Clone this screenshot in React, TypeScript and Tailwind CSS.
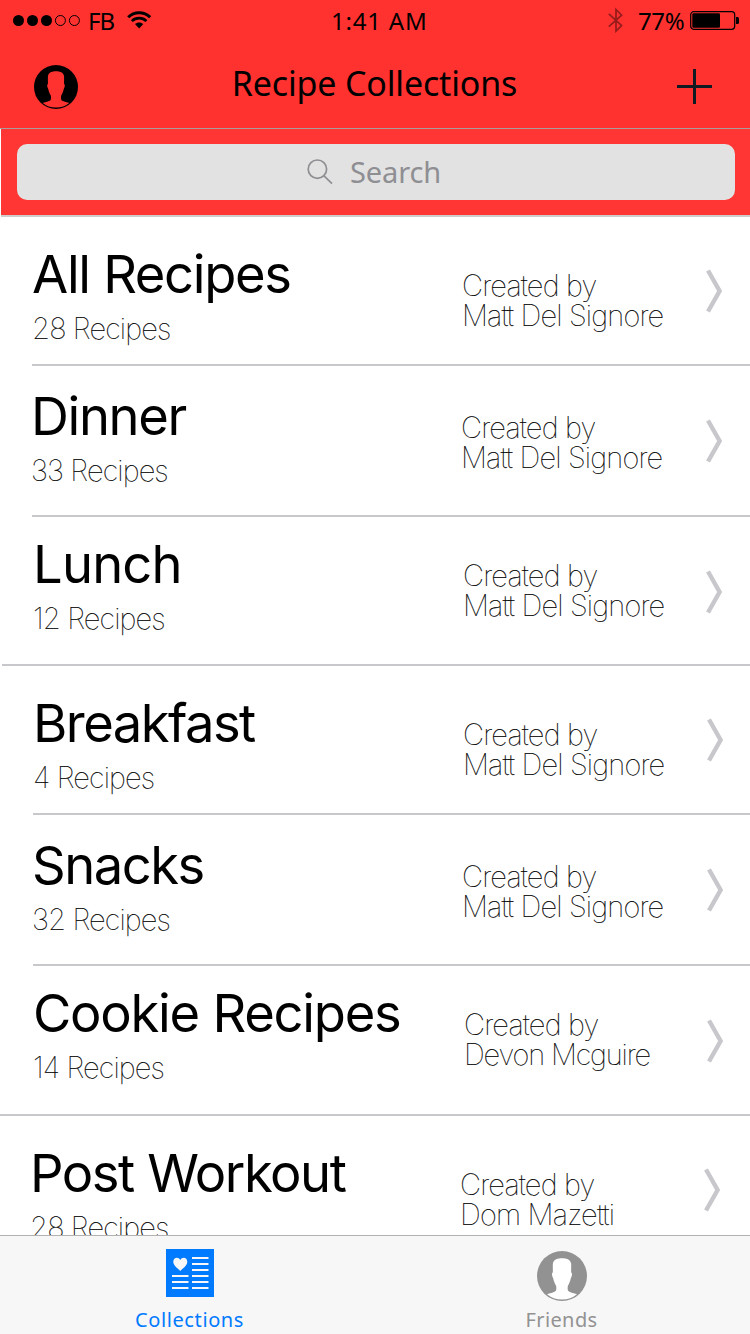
import React from "react";

type Collection = {
  title: string;
  count: string;
  author: string;
  row: string;
  line: string;
  text: string;
  tracking: string;
  creator: string;
  authorTracking: string;
  chevron: string;
};

const collections: Collection[] = [
  { title: "All Recipes", count: "28 Recipes", author: "Matt Del Signore", row: "h-[149px]", line: "ml-8", text: "pt-[25px] pl-[32px]", tracking: "tracking-[-1.32px]", creator: "pt-[54px] left-[462px]", authorTracking: "tracking-[-0.83px]", chevron: "left-[706px] top-[52px]" },
  { title: "Dinner", count: "33 Recipes", author: "Matt Del Signore", row: "h-[151px]", line: "ml-8", text: "pt-[18px] pl-[31px]", tracking: "tracking-[-1.35px]", creator: "pt-[47px] left-[461px]", authorTracking: "tracking-[-0.83px]", chevron: "left-[706px] top-[53px]" },
  { title: "Lunch", count: "12 Recipes", author: "Matt Del Signore", row: "h-[149px]", line: "ml-0.5", text: "pt-[15px] pl-[33px]", tracking: "tracking-[-0.8px]", creator: "pt-[44px] left-[463px]", authorTracking: "tracking-[-0.83px]", chevron: "left-[706px] top-[53px]" },
  { title: "Breakfast", count: "4 Recipes", author: "Matt Del Signore", row: "h-[149px]", line: "ml-[33px]", text: "pt-[25px] pl-[33px]", tracking: "tracking-[-1.55px]", creator: "pt-[54px] left-[463px]", authorTracking: "tracking-[-0.83px]", chevron: "left-[707px] top-[52px]" },
  { title: "Snacks", count: "32 Recipes", author: "Matt Del Signore", row: "h-[151px]", line: "ml-[33px]", text: "pt-[18px] pl-[32px]", tracking: "tracking-[-1.5px]", creator: "pt-[47px] left-[462px]", authorTracking: "tracking-[-0.83px]", chevron: "left-[707px] top-[53px]" },
  { title: "Cookie Recipes", count: "14 Recipes", author: "Devon Mcguire", row: "h-[150px]", line: "ml-0", text: "pt-[15px] pl-[33px]", tracking: "tracking-[-1.25px]", creator: "pt-[44px] left-[464px]", authorTracking: "tracking-[-1.15px]", chevron: "left-[707px] top-[53px]" },
  { title: "Post Workout", count: "28 Recipes", author: "Dom Mazetti", row: "h-[149px]", line: "ml-0", text: "pt-[25px] pl-[30px]", tracking: "tracking-[-1.45px]", creator: "pt-[54px] left-[460px]", authorTracking: "tracking-[-0.8px]", chevron: "left-[704px] top-[52px]" },
];

function Avatar({ className, head }: { className: string; head: string }) {
  return (
    <svg viewBox="0 0 50 50" className={className}>
      <circle cx="25" cy="25" r="25" fill="currentColor" />
      <path
        fill={head}
        d="M25 7.2C29 7.2 33.6 8.4 34.1 12.5C34.4 15 34 19 34.2 21.5C35.6 22 35 25 33.8 27.3C33.4 30 32 33 30.9 34.8C30.5 37 30.6 38 31 39.5C31.5 41 36 42 40 43.2C36 46.7 31 48.4 25 48.4C19 48.4 14 46.7 10 43.2C14 42 18.5 41 19 39.5C19.4 38 19.5 37 19.1 34.8C18 33 16.6 30 16.2 27.3C15 25 14.4 22 15.8 21.5C16 19 15.6 15 15.9 12.5C16.4 8.4 21 7.2 25 7.2Z"
      />
    </svg>
  );
}

function StatusBar() {
  return (
    <div className="flex h-10 items-center text-[24px] leading-10">
      <div className="flex w-[331px] items-center pl-[13px]">
        <svg className="h-3 w-[68px] shrink-0" viewBox="0 0 68 12">
          <circle cx="5.5" cy="6.5" r="5.5" />
          <circle cx="19.5" cy="6.5" r="5.5" />
          <circle cx="33.5" cy="6.5" r="5.5" />
          <circle cx="47.4" cy="6.5" r="5" fill="none" stroke="black" />
          <circle cx="61.4" cy="6.5" r="5" fill="none" stroke="black" />
        </svg>
        <span className="ml-[7px] w-[27px] pt-px tracking-[-1px]">FB</span>
        <svg className="ml-[12px] h-[19px] w-6" viewBox="0 0 24 19" fill="none" stroke="black">
          <path d="M1.2 6.3C7 .1 17.3 .1 23.1 6.3" strokeWidth="3" />
          <path d="M4.9 10.1C8.8 6.2 15.5 6.2 19.4 10.1" strokeWidth="2.7" />
          <path d="M8 13.1C10.2 11 14.1 11 16.3 13.1L12.15 17.6Z" fill="black" stroke="none" />
        </svg>
      </div>
      <span className="w-[277px] pt-px tracking-[0.8px]">1:41 AM</span>
      <svg className="h-[26px] w-[15px] text-[#951c1b]" viewBox="0 0 15 26" fill="none" stroke="currentColor" strokeWidth="1.7">
        <path d="M.8 6.9L13.6 18.5L8 24.1V2.5L13.6 8.1L.8 19.7" />
      </svg>
      <span className="ml-[15px] w-[52px] pt-px tracking-[-0.4px]">77%</span>
      <svg className="h-5 w-[49px] shrink-0" viewBox="0 0 49 20">
        <rect x=".7" y="1.7" width="44" height="17.6" rx="3" fill="none" stroke="black" strokeWidth="1.2" />
        <rect x="2.3" y="3.2" width="27.7" height="14.6" rx="1.2" />
        <path d="M46 7H47.6Q49 7 49 8.6V12.4Q49 14 47.6 14H46Z" />
      </svg>
    </div>
  );
}

function Header() {
  return (
    <header className="h-[129px] border-b border-[#ab9c9b] bg-[#ff3230]">
      <StatusBar />
      <div className="flex items-start justify-between pr-[37px] pl-[34px]">
        <Avatar className="mt-[25px] size-11 text-black" head="#ff3230" />
        <h1 className="mt-[22px] ml-[-6px] text-[34px] leading-[42px] tracking-[-0.17px]">Recipe Collections</h1>
        <svg className="mt-[29px] size-9 text-[#0f1a22]" viewBox="0 0 36 36" stroke="currentColor" strokeWidth="3">
          <path d="M0 17.5H35M17.5 0V35" />
        </svg>
      </div>
    </header>
  );
}

function SearchBar() {
  return (
    <div className="ml-px h-[88px] border-b-2 border-[#d0cccc] bg-[#ff3633] pt-[15px] pr-[15px] pl-4">
      <div className="flex h-14 items-center rounded-[10px] bg-[#e2e2e2] pl-[289px] text-[#8e8e93]">
        <svg className="size-7" viewBox="0 0 28 28" fill="none" stroke="currentColor" strokeWidth="1.7">
          <circle cx="11.4" cy="11.2" r="9.2" />
          <path d="M18 17.8L26 25.6" />
        </svg>
        <span className="ml-[16px] text-[29px] leading-[56px] tracking-[-0.1px]">Search</span>
      </div>
    </div>
  );
}

function Row({ item }: { item: Collection }) {
  return (
    <li className={`relative flex shrink-0 flex-col justify-between ${item.row}`}>
      <div className={`font-['Inter',sans-serif] ${item.text}`}>
        <h2 className={`text-[52.5px] leading-[64px] ${item.tracking}`}>{item.title}</h2>
        <p className="mt-[5px] text-[29px] leading-9 font-thin tracking-[-0.88px] [-webkit-text-stroke:0.2px_black]">{item.count}</p>
      </div>
      <div className={`absolute top-0 font-['Inter',sans-serif] text-[29px] leading-[30px] font-thin whitespace-nowrap [-webkit-text-stroke:0.2px_black] ${item.creator}`}>
        <p className="tracking-[-0.8px]">Created by</p>
        <p className={item.authorTracking}>{item.author}</p>
      </div>
      <svg className={`absolute h-[44px] w-4 text-[#c7c7cc] ${item.chevron}`} viewBox="0 0 16 44" fill="none" stroke="currentColor" strokeWidth="4.4">
        <path d="M2 1.5L13.6 22L2 42.5" />
      </svg>
      <div className={`h-0.5 bg-[#c8c7cc] ${item.line}`} />
    </li>
  );
}

function TabBar() {
  return (
    <nav className="flex h-[99px] border-t border-[#b2b2b2] bg-[#f7f7f7] text-[20px] leading-6">
      <div className="flex w-[379px] flex-col items-center pt-[13px] text-[#007aff]">
        <svg className="size-12" viewBox="0 0 48 48">
          <rect width="48" height="48" fill="currentColor" />
          <path fill="#f7f7f7" d="M14.3 22C12 19.5 7.3 16.8 7.3 12.7C7.3 8.3 12.5 7.5 14.3 11C16.1 7.5 21.3 8.3 21.3 12.7C21.3 16.8 16.6 19.5 14.3 22Z" />
          <path stroke="#f7f7f7" strokeWidth="2" d="M26 9H42.5M26 15H42.5M26 21H42.5M26 27H42.5M26 33H42.5M26 39H42.5M6 27H22.5M6 33H22.5M6 39H22.5" />
        </svg>
        <span className="mt-[11px] tracking-[0.6px]">Collections</span>
      </div>
      <div className="flex w-[365px] flex-col items-center pt-[15px] text-[#929292]">
        <Avatar className="size-[50px]" head="#ffffff" />
        <span className="mt-[7px] tracking-[0.4px]">Friends</span>
      </div>
    </nav>
  );
}

export default function App() {
  return (
    <div className="flex h-[1334px] w-[750px] flex-col overflow-hidden bg-white font-['Noto_Sans',sans-serif] text-black">
      <Header />
      <SearchBar />
      <ul className="flex h-[1018px] flex-col overflow-hidden">
        {collections.map((item) => (
          <Row key={item.title} item={item} />
        ))}
      </ul>
      <TabBar />
    </div>
  );
}
